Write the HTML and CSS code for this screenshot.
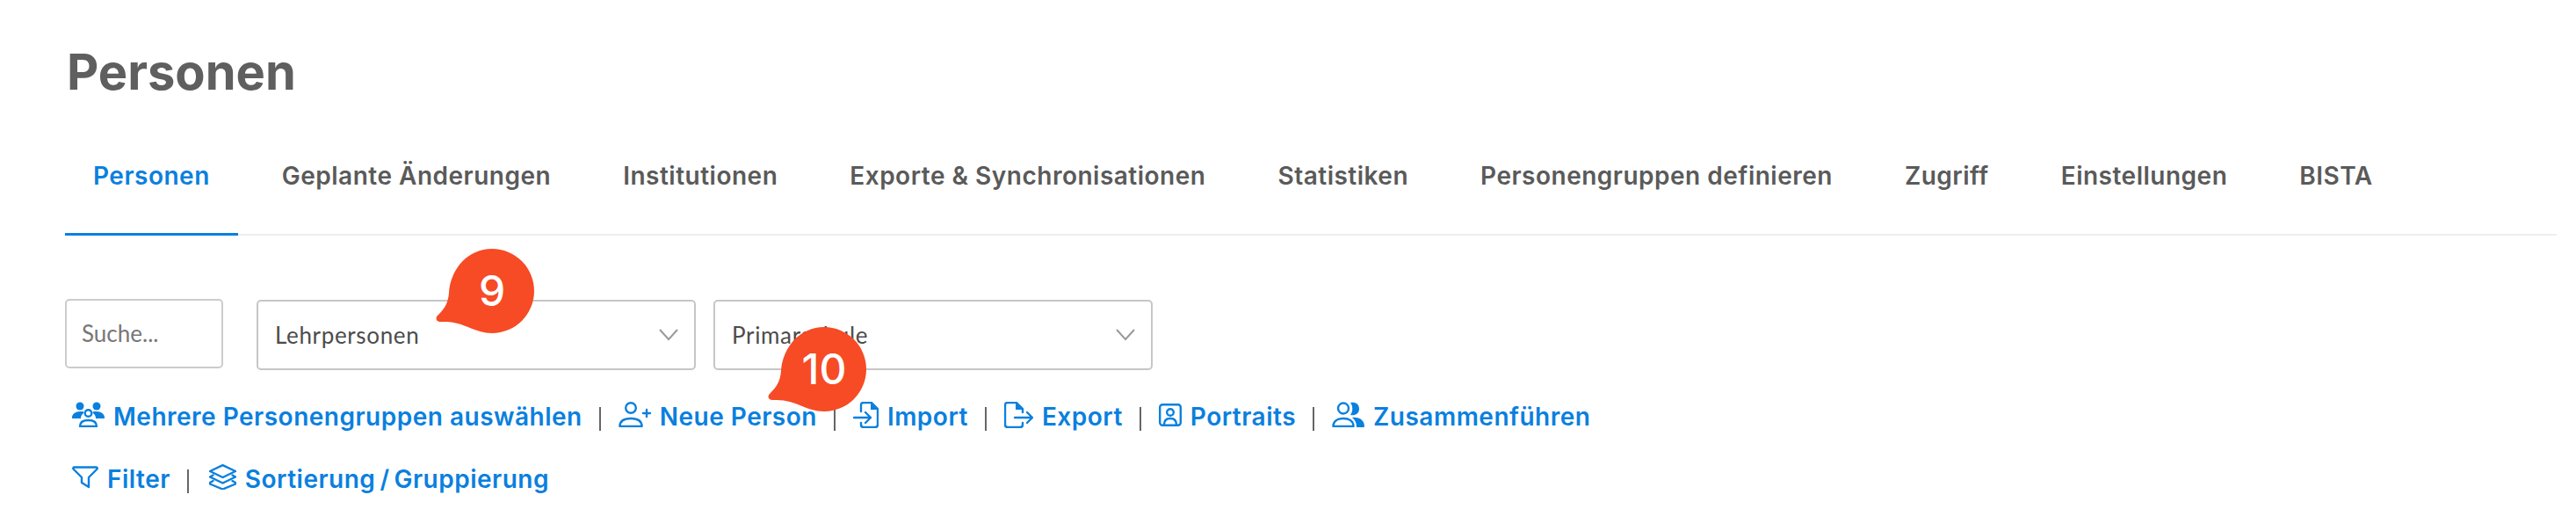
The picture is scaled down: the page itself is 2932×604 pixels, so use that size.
FILE: index.html
```html
<!DOCTYPE html>
<html lang="de">
<head>
<meta charset="utf-8">
<title>Personen</title>
<link rel="stylesheet" href="styles.css">
</head>
<body>
<main class="page">
  <h1 class="title">Personen</h1>
  <nav class="tabs">
    <a class="tab active">Personen</a>
    <a class="tab">Geplante Änderungen</a>
    <a class="tab">Institutionen</a>
    <a class="tab">Exporte &amp; Synchronisationen</a>
    <a class="tab">Statistiken</a>
    <a class="tab">Personengruppen definieren</a>
    <a class="tab">Zugriff</a>
    <a class="tab">Einstellungen</a>
    <a class="tab">BISTA</a>
  </nav>
  <div class="filters">
    <div class="search">Suche...</div>
    <div class="select wide">
      <span>Lehrpersonen</span>
      <svg class="chev" viewBox="0 0 22 14"><path d="M1 1l10 11L21 1"/></svg>
      <div class="badge badge-nine">
        <svg viewBox="0 0 130 120"><path d="M80 13a48 48 0 1 1 0 96c-20 0-32-13-54-13h-5c-4 0-6-4-3-7 8-8 12-14 13-26 2-28 22-50 49-50z"/></svg>
        <b>9</b>
      </div>
    </div>
    <div class="select wide second">
      <span>Primarschule</span>
      <svg class="chev" viewBox="0 0 22 14"><path d="M1 1l10 11L21 1"/></svg>
      <div class="badge badge-ten">
        <svg viewBox="0 0 130 120"><path d="M80 13a48 48 0 1 1 0 96c-20 0-32-13-54-13h-5c-4 0-6-4-3-7 8-8 12-14 13-26 2-28 22-50 49-50z"/></svg>
        <b>10</b>
      </div>
    </div>
  </div>
  <div class="links">
    <a class="link">
      <svg class="ic w37" viewBox="0 0 37 29"><g class="fill"><circle cx="9" cy="5" r="4.500"/><circle cx="28" cy="5" r="4.500"/><path d="M0 18c0-4 4-7 9-7h3c1 0 2 1 1 2-2 2-3 3-3 6H1c-1 0-1 0-1-1zM37 18c0-4-4-7-9-7h-3c-1 0-2 1-1 2 2 2 3 3 3 6h9c1 0 1 0 1-1z"/></g><g class="line"><circle cx="18.500" cy="13" r="3.800"/><path d="M9 28c0-5 4-7 9.500-7S28 23 28 28z"/></g></svg>
      <span>Mehrere Personengruppen auswählen</span>
    </a>
    <i class="sep"></i>
    <a class="link">
      <svg class="ic w37" viewBox="0 0 37 29"><g class="line"><circle cx="14" cy="7" r="5.800"/><path d="M1.500 28c0-6 5-9 12.500-9s12.500 3 12.500 9z"/><path d="M28 13h8M32 9v8"/></g></svg>
      <span>Neue Person</span>
    </a>
    <i class="sep"></i>
    <a class="link">
      <svg class="ic w29" viewBox="0 0 29 30"><g class="line"><path d="M9 11V4c0-2 1-3 3-3h9l7 7v18c0 2-1 3-3 3H12c-2 0-3-1-3-3v-2"/><path d="M1 18h19M14 12l6 6-6 6"/></g><path class="fill" d="M20 1l8 8h-8z"/></svg>
      <span>Import</span>
    </a>
    <i class="sep"></i>
    <a class="link">
      <svg class="ic w33" viewBox="0 0 33 30"><g class="line"><path d="M21 12V8l-7-7H4C2 1 1 2 1 4v22c0 2 1 3 3 3h14c2 0 3-1 3-3v-2"/><path d="M12 18h20M26 12l6 6-6 6"/></g><path class="fill" d="M13 1l8 8h-8z"/></svg>
      <span>Export</span>
    </a>
    <i class="sep"></i>
    <a class="link">
      <svg class="ic w26" viewBox="0 0 26 26"><g class="line"><rect x="1.200" y="1.200" width="23.600" height="23.600" rx="3"/><circle cx="13" cy="10" r="3.800"/><path d="M6 24c0-5 3-7 7-7s7 2 7 7"/></g></svg>
      <span>Portraits</span>
    </a>
    <i class="sep"></i>
    <a class="link">
      <svg class="ic w37" viewBox="0 0 37 29"><g class="line"><circle cx="13" cy="7.500" r="6"/><path d="M1.500 28c0-6 5-9 11.500-9s11.500 3 11.500 9z"/></g><g class="fill"><path d="M21 1c5-1 10 1 10 7s-5 8-10 7c3-4 3-10 0-14zM23 18c8-1 14 3 14 10c0 1-1 1-2 1h-7c0-4-1-8-5-11z"/></g></svg>
      <span>Zusammenführen</span>
    </a>
  </div>
  <div class="links row-two">
    <a class="link">
      <svg class="ic w30" viewBox="0 0 30 26"><g class="line"><path d="M2.500 1.500h25c1 0 1.500 1 1 2L19 13v11l-8-5v-6L1.500 3.500c-.5-1 0-2 1-2z"/></g></svg>
      <span>Filter</span>
    </a>
    <i class="sep"></i>
    <a class="link">
      <svg class="ic w31" viewBox="0 0 31 29"><g class="line"><path d="M15.500 1.200L30 8l-14.500 7L1 8z"/><path d="M4.500 12.500L1 14.500l14.500 7 14.500-7-3.500-2"/><path d="M4.500 19L1 21v1.500l14.500 6 14.500-6V21l-3.500-2"/></g></svg>
      <span>Sortierung<span class="slash">/</span>Gruppierung</span>
    </a>
  </div>
</main>
</body>
</html>
```
FILE: styles.css
```css
* { box-sizing: border-box; }
html, body { margin: 0; padding: 0; background: #fff; }
body { font-family: Inter, Lato, sans-serif; color: #5a5a5a; }
.page { padding: 47px 22px 0 74px; height: 604px; overflow: hidden; }
.title { margin: 0; padding-left: 2px; font-size: 56px; line-height: 70px; font-weight: 700; color: #5f5f5f; }
.tabs { display: flex; gap: 18px; margin-top: 44px; border-bottom: 2px solid #eee; height: 107px; }
.tab { padding: 0 32px; height: 107px; line-height: 78px; font-size: 28px; font-weight: 600; letter-spacing: 0.5px; color: #5a5a5a; white-space: nowrap; }
.tab.active { color: #0a80de; border-bottom: 3px solid #0a80de; }
.filters { display: flex; align-items: flex-start; margin-top: 72px; }
.search { width: 180px; height: 79px; border: 2px solid #ccc; border-radius: 5px; padding-left: 17px; line-height: 75px; font-size: 26px; font-family: Lato, sans-serif; color: #777; }
.select { position: relative; display: flex; align-items: center; justify-content: space-between; height: 80px; margin-top: 1px; border: 2px solid #c6c6c6; border-radius: 5px; padding: 0 18px 0 19px; font-size: 26px; font-family: Lato, sans-serif; letter-spacing: 0.65px; color: #4c4c4c; }
.wide { width: 500px; margin-left: 38px; }
.second { margin-left: 20px; }
.chev { width: 22px; height: 14px; fill: none; stroke: #999; stroke-width: 2; }
.badge { position: absolute; width: 130px; height: 120px; }
.badge svg { display: block; width: 130px; height: 120px; fill: #f64b25; }
.badge b { position: absolute; left: 32px; top: 13px; width: 96px; height: 96px; text-align: center; font: 500 48px/96px Inter, sans-serif; letter-spacing: 0; color: #fff; }
.badge-nine { left: 186px; top: -73px; }
.badge-ten { left: 44px; top: 16px; }
.links { display: flex; align-items: center; height: 40px; margin-top: 33px; }
.row-two { margin-top: 31px; }
.link { display: flex; align-items: center; gap: 10px; font-size: 28px; font-weight: 600; letter-spacing: 0.5px; color: #0a80de; white-space: nowrap; margin-left: 8px; }
.sep { width: 2px; height: 27px; margin: 4px 20px 0 19px; background: #666; }
.row-two .sep { margin-right: 23px; }
.sep + .link { margin-left: 0; }
.slash { margin: 0 5px; }
.ic { display: block; flex: none; margin-top: -5px; }
.w37 { width: 37px; height: 29px; }
.w29 { width: 29px; height: 30px; }
.w33 { width: 33px; height: 30px; }
.w26 { width: 26px; height: 26px; }
.w30 { width: 30px; height: 26px; }
.w31 { width: 31px; height: 29px; }
.fill { fill: #0a80de; stroke: none; }
.line { fill: none; stroke: #0a80de; stroke-width: 2.4; stroke-linejoin: round; stroke-linecap: round; }
```
